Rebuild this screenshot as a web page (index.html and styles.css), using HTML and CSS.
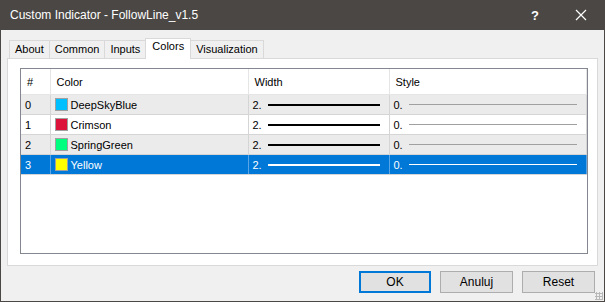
FILE: index.html
```html
<!DOCTYPE html>
<html lang="en">
<head>
  <meta charset="UTF-8" />
  <title>Custom Indicator - FollowLine_v1.5</title>
  <link rel="stylesheet" href="styles.css">
</head>
<body>

  <div class="window">
    <header class="titlebar">
      <span class="title">Custom Indicator - FollowLine_v1.5</span>
      <span class="help">?</span>
      <span class="close">
        <svg width="12" height="12" viewBox="0 0 12 12"><path d="M1 1 L11 11 M11 1 L1 11" stroke="#fff" stroke-width="1.2" fill="none"/></svg>
      </span>
    </header>

    <div class="dialog">
      <nav class="tabs">
        <span class="tab">About</span>
        <span class="tab">Common</span>
        <span class="tab">Inputs</span>
        <span class="tab active">Colors</span>
        <span class="tab">Visualization</span>
      </nav>

      <section class="panel">
        <div class="list">
          <table>
            <colgroup>
              <col class="c-num" />
              <col class="c-color" />
              <col class="c-width" />
              <col />
            </colgroup>
            <thead>
              <tr><th>#</th><th>Color</th><th>Width</th><th>Style</th></tr>
            </thead>
            <tbody>
              <tr class="odd">
                <td>0</td>
                <td><span class="swatch" style="background:#00bfff"></span>DeepSkyBlue</td>
                <td><div class="val">2.<span class="width-line"></span></div></td>
                <td><div class="val">0.<span class="style-line"></span></div></td>
              </tr>
              <tr>
                <td>1</td>
                <td><span class="swatch" style="background:#dc143c"></span>Crimson</td>
                <td><div class="val">2.<span class="width-line"></span></div></td>
                <td><div class="val">0.<span class="style-line"></span></div></td>
              </tr>
              <tr class="odd">
                <td>2</td>
                <td><span class="swatch" style="background:#00ff7f"></span>SpringGreen</td>
                <td><div class="val">2.<span class="width-line"></span></div></td>
                <td><div class="val">0.<span class="style-line"></span></div></td>
              </tr>
              <tr class="selected">
                <td>3</td>
                <td><span class="swatch" style="background:#ffff00"></span>Yellow</td>
                <td><div class="val">2.<span class="width-line"></span></div></td>
                <td><div class="val">0.<span class="style-line"></span></div></td>
              </tr>
            </tbody>
          </table>
        </div>
      </section>

      <footer class="buttons">
        <button class="btn default">OK</button>
        <button class="btn">Anuluj</button>
        <button class="btn">Reset</button>
        <span class="grip"></span>
      </footer>
    </div>
  </div>

</body>
</html>
```

FILE: styles.css
```css
:root {
  --frame: #4a4744;
  --face: #f0f0f0;
  --line: #d9d9d9;
  --select: #0078d7;
}

body {
  margin: 0;
  font-family: "Liberation Sans", Arial, sans-serif;
  font-size: 11px;
  color: #000;
  background: #fff;
}

.window {
  width: 605px;
  height: 302px;
  box-sizing: border-box;
  border: 1px solid var(--frame);
  border-top: 0;
  display: flex;
  flex-direction: column;
  background: var(--face);
}

.titlebar {
  height: 30px;
  flex: none;
  background: var(--frame);
  color: #fff;
  display: flex;
  align-items: center;
  font-size: 12px;
}

.title {
  padding-left: 9px;
  flex: 1;
}

.help {
  width: 14px;
  margin-right: 30px;
  font-size: 13px;
  font-weight: bold;
}

.close {
  display: flex;
  margin-right: 17px;
}

.dialog {
  flex: 1;
  display: flex;
  flex-direction: column;
  padding: 8px 6px 0 6px;
}

.tabs {
  display: flex;
  align-items: flex-end;
  height: 20px;
  padding-left: 2px;
  position: relative;
  z-index: 1;
}

.tab {
  height: 18px;
  box-sizing: border-box;
  border: 1px solid var(--line);
  border-bottom: 0;
  margin-right: -1px;
  padding: 2px 5px 0 5px;
  background: var(--face);
}

.tab.active {
  height: 21px;
  margin-bottom: -1px;
  background: #fff;
  padding: 1px 6px 0 6px;
}

.panel {
  height: 208px;
  box-sizing: border-box;
  border: 1px solid var(--line);
  background: #fff;
  padding: 9px 9px 11px 12px;
}

.list {
  height: 100%;
  box-sizing: border-box;
  border: 1px solid #828790;
}

table {
  width: 100%;
  border-collapse: collapse;
  table-layout: fixed;
}

.c-num { width: 29px; }
.c-color { width: 198px; }
.c-width { width: 141px; }

th {
  height: 25px;
  font-weight: normal;
  text-align: left;
  padding: 0 0 0 6px;
  border-right: 1px solid #e5e5e5;
  border-bottom: 1px solid #e5e5e5;
}

td {
  height: 19px;
  padding: 0 0 0 4px;
  border-right: 1px solid #d5d5d5;
  border-bottom: 1px solid #d5d5d5;
  white-space: nowrap;
}

tbody tr:first-child td {
  border-top: 1px solid #d5d5d5;
}

tr.odd td {
  background: #ebebeb;
}

tr.selected td {
  background: var(--select);
  color: #fff;
  border-right-color: #5aa5e5;
}

.swatch {
  display: inline-block;
  width: 11px;
  height: 11px;
  border: 1px solid #a0a0a0;
  vertical-align: -2px;
  margin: 0 3px 0 0;
}

.val {
  display: flex;
  align-items: center;
  gap: 6px;
  padding-right: 9px;
}

.width-line {
  flex: 1;
  height: 2px;
  background: #000;
}

.style-line {
  flex: 1;
  height: 1px;
  background: #a0a0a0;
}

tr.selected .width-line,
tr.selected .style-line {
  background: #fff;
}

.buttons {
  flex: 1;
  display: flex;
  justify-content: flex-end;
  align-items: flex-start;
  gap: 9px;
  padding: 5px 3px 0 0;
  position: relative;
}

.btn {
  width: 73px;
  height: 22px;
  font-family: inherit;
  font-size: 12px;
  background: #e1e1e1;
  border: 1px solid #adadad;
  padding: 0;
}

.btn.default {
  width: 72px;
  border: 2px solid var(--select);
}

.grip {
  position: absolute;
  right: -5px;
  bottom: 1px;
  width: 8px;
  height: 8px;
  background: radial-gradient(circle, #b8b8b8 1px, transparent 1.2px) 0 0 / 3px 3px;
}
```
